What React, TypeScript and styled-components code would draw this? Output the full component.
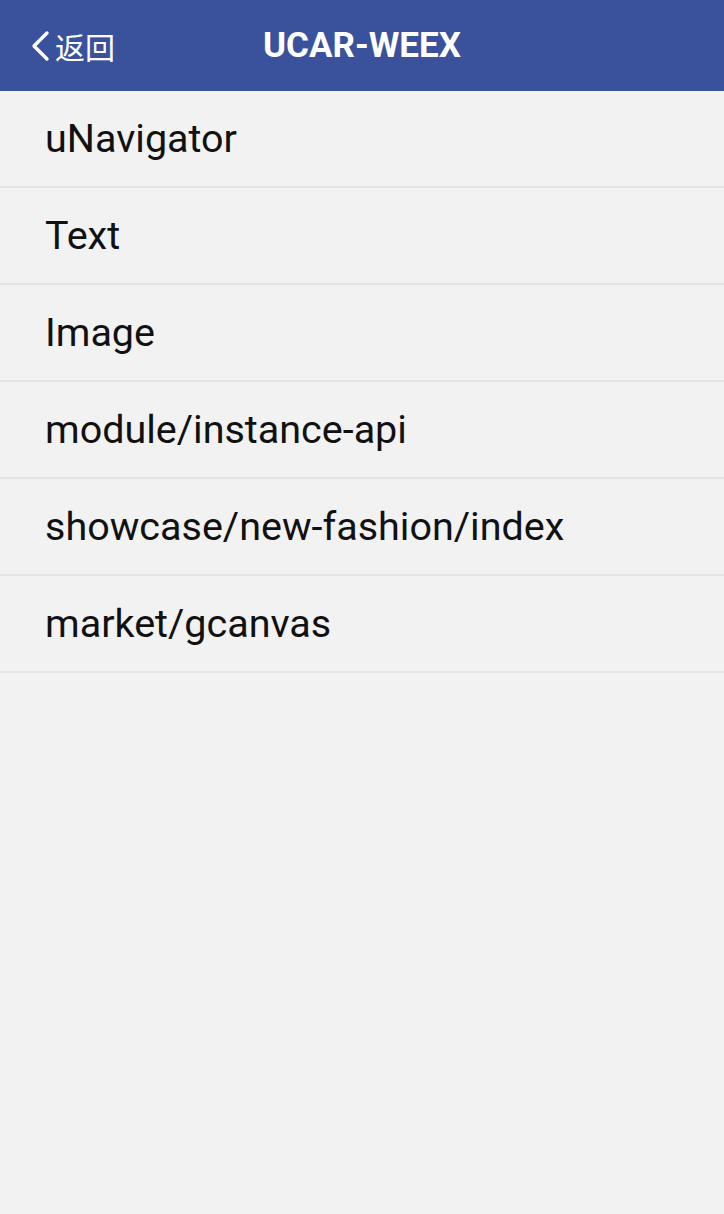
import React from "react";
import styled, { createGlobalStyle } from "styled-components";

const Global = createGlobalStyle`
  html, body { margin: 0; padding: 0; background: #f2f2f2; }
  body { font-family: Roboto, "Noto Sans", "Noto Sans CJK SC", sans-serif; }
  * { box-sizing: border-box; }
`;

const Page = styled.div`
  width: 724px;
  min-height: 1214px;
  background: #f2f2f2;
  display: flex;
  flex-direction: column;
`;

const Header = styled.header`
  height: 91px;
  background: #3a529b;
  display: grid;
  grid-template-columns: 1fr auto 1fr;
  align-items: center;
  color: #ffffff;
`;

const Back = styled.div`
  display: flex;
  align-items: center;
  gap: 4px;
  padding-left: 29px;
  font-family: "Noto Sans CJK SC", sans-serif;
  font-size: 30px;
  line-height: 1;
  color: #ffffff;
`;

const Title = styled.h1`
  margin: 0;
  font-family: Roboto, "Liberation Sans", sans-serif;
  font-weight: 700;
  font-size: 35px;
  color: #ffffff;
`;

const List = styled.ul`
  list-style: none;
  margin: 0;
  padding: 0;
`;

const Row = styled.li`
  height: 97px;
  border-bottom: 2px solid #e4e4e4;
  display: flex;
  align-items: center;
  padding-left: 45px;
  font-family: Roboto, sans-serif;
  font-size: 39.5px;
  color: #111111;
`;

const items = [
  "uNavigator",
  "Text",
  "Image",
  "module/instance-api",
  "showcase/new-fashion/index",
  "market/gcanvas",
];

export default function App() {
  return (
    <>
      <Global />
      <Page>
        <Header>
          <Back>
            <svg width="22" height="32" viewBox="0 0 22 32" fill="none">
              <path d="M18 3 L5 16 L18 29" stroke="#ffffff" strokeWidth="3.4" strokeLinecap="round" strokeLinejoin="round" />
            </svg>
            <span>返回</span>
          </Back>
          <Title>UCAR-WEEX</Title>
          <div />
        </Header>
        <List>
          {items.map((t) => (
            <Row key={t}>{t}</Row>
          ))}
        </List>
      </Page>
    </>
  );
}
